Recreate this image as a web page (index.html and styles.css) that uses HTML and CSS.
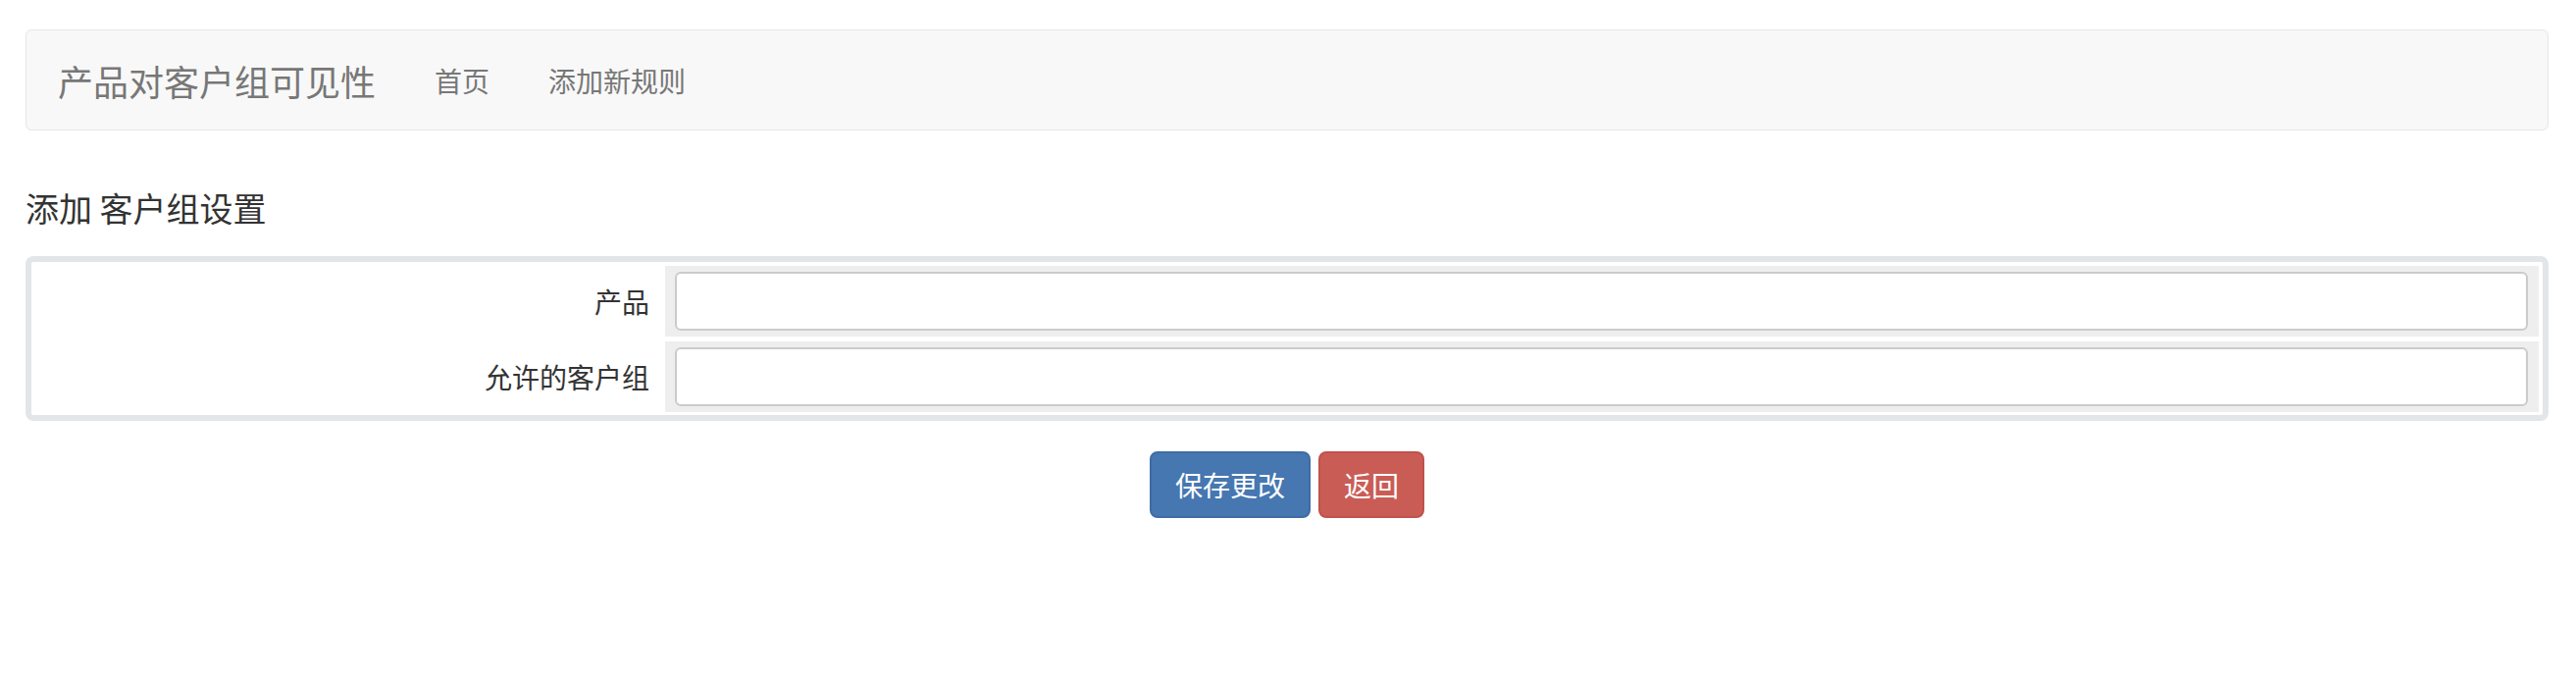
FILE: index.html
```html
<!DOCTYPE html>
<html lang="zh-CN">
<head>
<meta charset="utf-8">
<title>产品对客户组可见性</title>
<link rel="stylesheet" href="styles.css">
</head>
<body>
<div class="page">
  <nav class="navbar">
    <a class="brand" href="#">产品对客户组可见性</a>
    <a class="nav-link" href="#">首页</a>
    <a class="nav-link" href="#">添加新规则</a>
  </nav>
  <h4 class="title">添加 客户组设置</h4>
  <div class="panel">
    <div class="row">
      <label class="label">产品</label>
      <div class="field"><input class="input" type="text"></div>
    </div>
    <div class="row">
      <label class="label">允许的客户组</label>
      <div class="field"><input class="input" type="text"></div>
    </div>
  </div>
  <div class="actions">
    <button class="btn btn-primary" type="button">保存更改</button>
    <button class="btn btn-danger" type="button">返回</button>
  </div>
</div>
</body>
</html>
```
FILE: styles.css
```css
html, body {
  margin: 0;
  padding: 0;
  background: #fff;
}
body {
  font-family: "Noto Sans CJK SC", "Liberation Sans", sans-serif;
  color: #333;
}
.page {
  padding: 30px 28px 0 26px;
}
.navbar {
  display: flex;
  align-items: center;
  height: 103px;
  box-sizing: border-box;
  background: #f8f8f8;
  border: 1px solid #e7e7e7;
  border-radius: 6px;
}
.brand {
  padding: 0 30px 0 32px;
  font-size: 36px;
  line-height: 40px;
  color: #777;
  text-decoration: none;
}
.nav-link {
  padding: 0 30px;
  font-size: 28px;
  line-height: 40px;
  color: #777;
  text-decoration: none;
}
.title {
  margin: 59px 0 29px;
  font-size: 34px;
  line-height: 40px;
  font-weight: normal;
  color: #333;
}
.panel {
  display: flex;
  flex-direction: column;
  gap: 5px;
  border: 6px solid #e3e6e9;
  border-radius: 8px;
  padding: 4px 4px 3px;
}
.row {
  display: grid;
  grid-template-columns: 25% 1fr;
  column-gap: 4px;
  height: 72px;
}
.label {
  display: flex;
  align-items: center;
  justify-content: flex-end;
  padding-right: 12px;
  font-size: 28px;
  color: #333;
}
.field {
  background: #eee;
  padding: 6px 11px 6px 10px;
  display: flex;
  align-items: center;
}
.input {
  width: 100%;
  height: 60px;
  box-sizing: border-box;
  border: 2px solid #cbcbcb;
  border-radius: 6px;
  background: #fff;
  margin: 0;
}
.actions {
  display: flex;
  justify-content: center;
  gap: 8px;
  margin-top: 31px;
}
.btn {
  height: 68px;
  padding: 0 24px;
  border: 2px solid;
  border-radius: 8px;
  font-family: "Noto Sans CJK SC", sans-serif;
  font-size: 28px;
  line-height: 1;
  color: #fff;
}
.btn-primary {
  background: #4677b1;
  border-color: #3f6ca4;
}
.btn-danger {
  background: #c95d56;
  border-color: #c0524b;
}
```
